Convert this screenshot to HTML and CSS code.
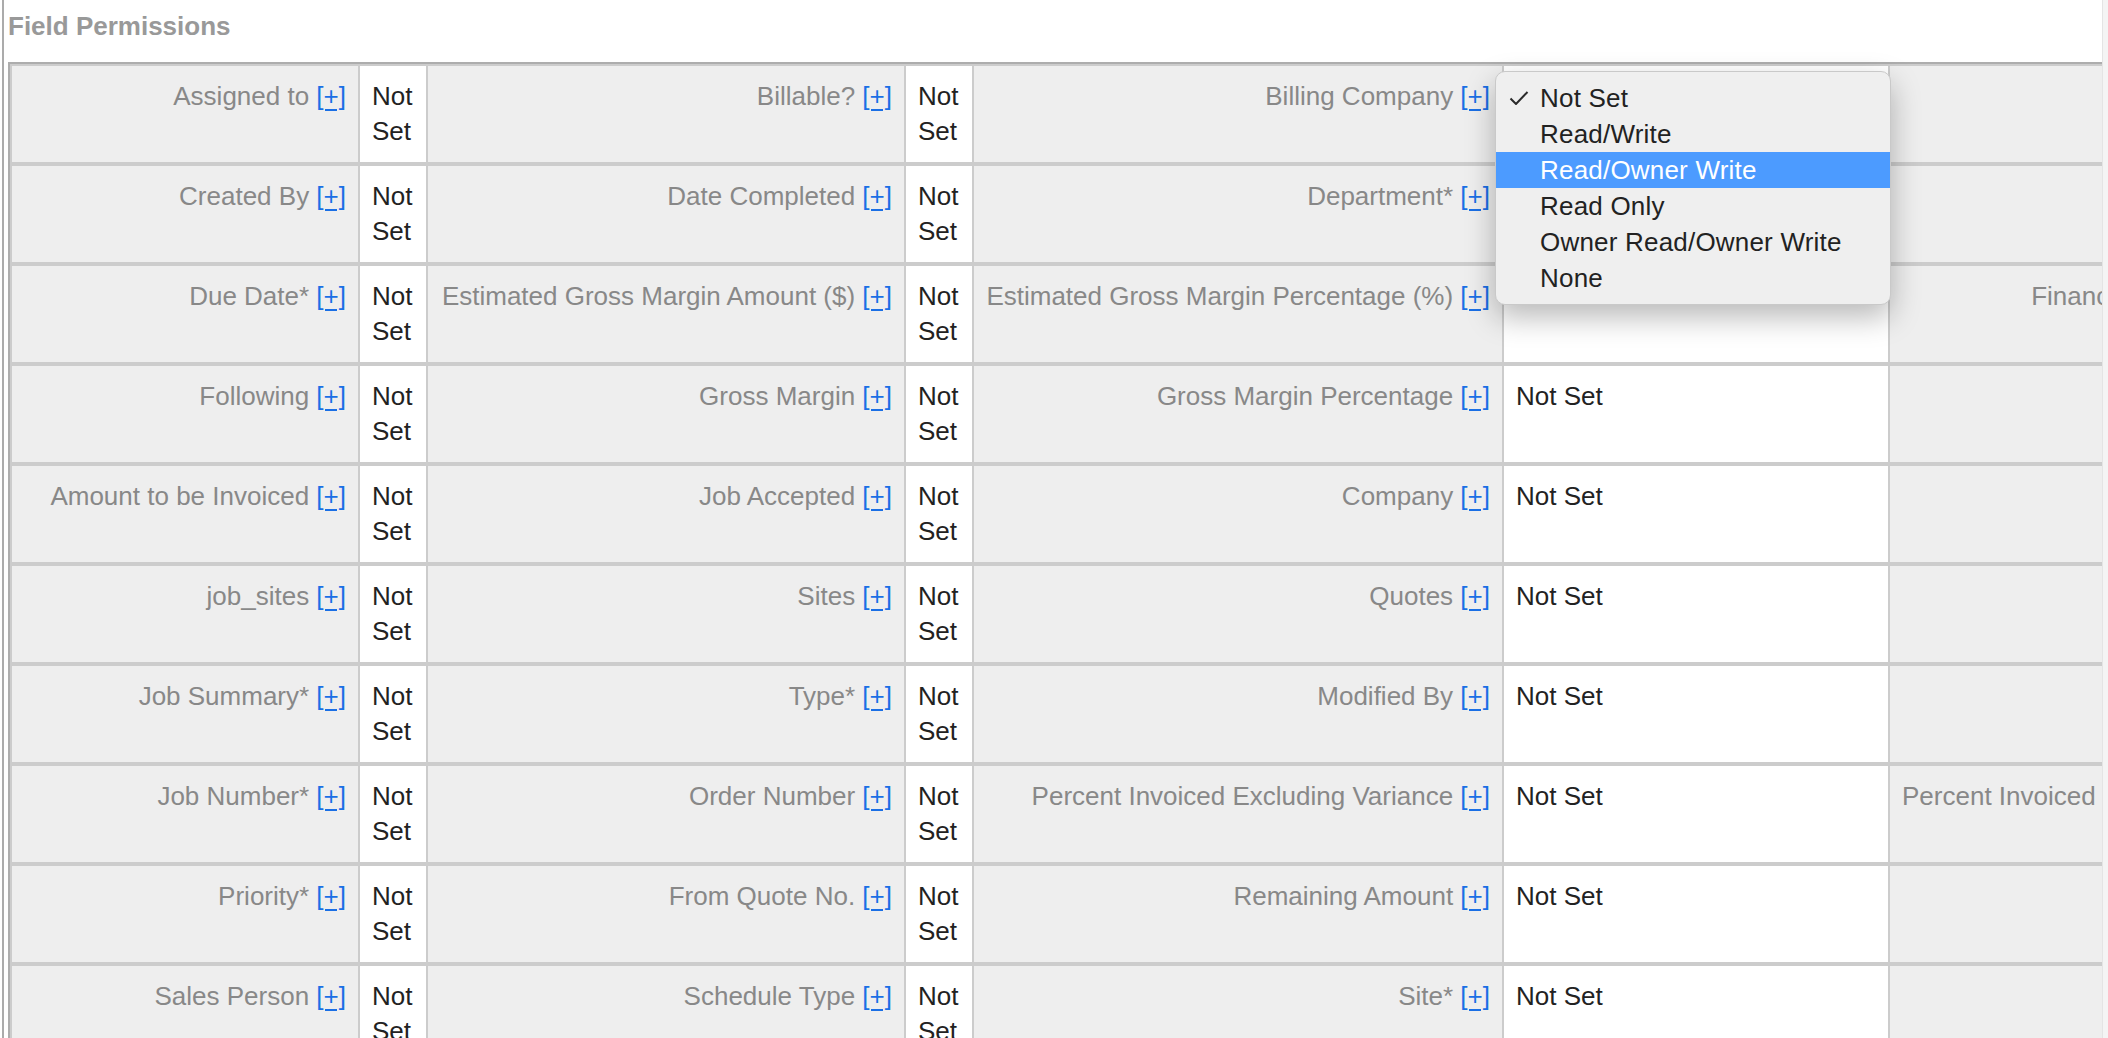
FILE: index.html
```html
<!DOCTYPE html>
<html lang="en">
<head>
<meta charset="utf-8">
<title>Field Permissions</title>
<link rel="stylesheet" href="styles.css">
</head>
<body>
<div class="page">
  <div class="panel">
    <h2 class="panel-title">Field Permissions</h2>
    <table class="perm-table">
      <colgroup>
        <col class="c-l1"><col class="c-v1"><col class="c-l2"><col class="c-v2"><col class="c-l3"><col class="c-v3"><col class="c-l4">
      </colgroup>
      <tbody>
        <tr>
          <td class="lbl first">Assigned to <a class="add" href="#">[+]</a></td><td class="val">Not Set</td>
          <td class="lbl">Billable? <a class="add" href="#">[+]</a></td><td class="val">Not Set</td>
          <td class="lbl">Billing Company <a class="add" href="#">[+]</a></td>
          <td class="val val-select">Not Set
            <ul class="menu">
              <li class="menu-item"><svg class="check" viewBox="0 0 20 14" width="20" height="14"><path d="M1.5 7.5 L7 13 L18.5 1" fill="none" stroke="#2a2a2a" stroke-width="2"/></svg>Not Set</li>
              <li class="menu-item">Read/Write</li>
              <li class="menu-item active">Read/Owner Write</li>
              <li class="menu-item">Read Only</li>
              <li class="menu-item">Owner Read/Owner Write</li>
              <li class="menu-item">None</li>
            </ul>
          </td>
          <td class="lbl"></td>
        </tr>
        <tr>
          <td class="lbl first">Created By <a class="add" href="#">[+]</a></td><td class="val">Not Set</td>
          <td class="lbl">Date Completed <a class="add" href="#">[+]</a></td><td class="val">Not Set</td>
          <td class="lbl">Department* <a class="add" href="#">[+]</a></td><td class="val">Not Set</td>
          <td class="lbl"></td>
        </tr>
        <tr>
          <td class="lbl first">Due Date* <a class="add" href="#">[+]</a></td><td class="val">Not Set</td>
          <td class="lbl">Estimated Gross Margin Amount ($) <a class="add" href="#">[+]</a></td><td class="val">Not Set</td>
          <td class="lbl">Estimated Gross Margin Percentage (%) <a class="add" href="#">[+]</a></td><td class="val">Not Set</td>
          <td class="lbl">Financial Status <a class="add" href="#">[+]</a></td>
        </tr>
        <tr>
          <td class="lbl first">Following <a class="add" href="#">[+]</a></td><td class="val">Not Set</td>
          <td class="lbl">Gross Margin <a class="add" href="#">[+]</a></td><td class="val">Not Set</td>
          <td class="lbl">Gross Margin Percentage <a class="add" href="#">[+]</a></td><td class="val">Not Set</td>
          <td class="lbl"></td>
        </tr>
        <tr>
          <td class="lbl first">Amount to be Invoiced <a class="add" href="#">[+]</a></td><td class="val">Not Set</td>
          <td class="lbl">Job Accepted <a class="add" href="#">[+]</a></td><td class="val">Not Set</td>
          <td class="lbl">Company <a class="add" href="#">[+]</a></td><td class="val">Not Set</td>
          <td class="lbl"></td>
        </tr>
        <tr>
          <td class="lbl first">job_sites <a class="add" href="#">[+]</a></td><td class="val">Not Set</td>
          <td class="lbl">Sites <a class="add" href="#">[+]</a></td><td class="val">Not Set</td>
          <td class="lbl">Quotes <a class="add" href="#">[+]</a></td><td class="val">Not Set</td>
          <td class="lbl"></td>
        </tr>
        <tr>
          <td class="lbl first">Job Summary* <a class="add" href="#">[+]</a></td><td class="val">Not Set</td>
          <td class="lbl">Type* <a class="add" href="#">[+]</a></td><td class="val">Not Set</td>
          <td class="lbl">Modified By <a class="add" href="#">[+]</a></td><td class="val">Not Set</td>
          <td class="lbl"></td>
        </tr>
        <tr>
          <td class="lbl first">Job Number* <a class="add" href="#">[+]</a></td><td class="val">Not Set</td>
          <td class="lbl">Order Number <a class="add" href="#">[+]</a></td><td class="val">Not Set</td>
          <td class="lbl">Percent Invoiced Excluding Variance <a class="add" href="#">[+]</a></td><td class="val">Not Set</td>
          <td class="lbl">Percent Invoiced Including Variance <a class="add" href="#">[+]</a></td>
        </tr>
        <tr>
          <td class="lbl first">Priority* <a class="add" href="#">[+]</a></td><td class="val">Not Set</td>
          <td class="lbl">From Quote No. <a class="add" href="#">[+]</a></td><td class="val">Not Set</td>
          <td class="lbl">Remaining Amount <a class="add" href="#">[+]</a></td><td class="val">Not Set</td>
          <td class="lbl"></td>
        </tr>
        <tr>
          <td class="lbl first">Sales Person <a class="add" href="#">[+]</a></td><td class="val">Not Set</td>
          <td class="lbl">Schedule Type <a class="add" href="#">[+]</a></td><td class="val">Not Set</td>
          <td class="lbl">Site* <a class="add" href="#">[+]</a></td><td class="val">Not Set</td>
          <td class="lbl"></td>
        </tr>
      </tbody>
    </table>
  </div>
  <div class="scroll-edge"></div>
</div>
</body>
</html>
```
FILE: styles.css
```css
html, body {
  margin: 0;
  padding: 0;
  background: #fff;
}
body {
  font-family: "Liberation Sans", Arial, Helvetica, sans-serif;
  height: 1038px;
  overflow: hidden;
}
.page {
  display: flex;
  height: 1038px;
}
.panel {
  flex: 1;
  min-width: 0;
  margin-left: 2px;
  border-left: 2px solid #ababab;
  padding-left: 4px;
  overflow: hidden;
}
.scroll-edge {
  width: 5px;
  background: #f4f4f4;
  border-left: 1px solid #e4e4e4;
}
.panel-title {
  margin: 0 0 21px 0;
  padding-top: 11px;
  font-size: 26px;
  line-height: 30px;
  font-weight: bold;
  color: #999;
}
.perm-table {
  border-collapse: separate;
  border-spacing: 0;
  table-layout: fixed;
  width: 2260px;
  border: 2px solid #adadad;
}
.c-l1 { width: 349px; }
.c-v1 { width: 68px; }
.c-l2 { width: 478px; }
.c-v2 { width: 68px; }
.c-l3 { width: 530px; }
.c-v3 { width: 386px; }
.c-l4 { width: 377px; }
.perm-table td {
  border-top: 2px solid #ccc;
  border-bottom: 2px solid #ccc;
  border-left: 1px solid #ccc;
  border-right: 1px solid #ccc;
  padding: 13px 12px;
  vertical-align: top;
  font-size: 26px;
  line-height: 35px;
}
.perm-table td.first {
  border-left-width: 2px;
}
.lbl {
  background: #eee;
  color: #888;
  text-align: right;
  white-space: nowrap;
}
.val {
  background: #fff;
  color: #222;
}
.add {
  color: #1a6fe5;
  text-decoration: underline;
  text-decoration-thickness: 2px;
  text-underline-offset: 4px;
}
.val-select {
  position: relative;
}
.menu {
  position: absolute;
  left: -9px;
  top: 5px;
  width: 394px;
  margin: 0;
  padding: 8px 0;
  list-style: none;
  background: #efefef;
  border: 1px solid #c9c9c9;
  border-radius: 10px;
  box-shadow: 0 12px 30px rgba(0, 0, 0, 0.28);
  z-index: 5;
}
.menu-item {
  position: relative;
  height: 36px;
  line-height: 36px;
  padding-left: 44px;
  color: #222;
  font-size: 26px;
  letter-spacing: 0.2px;
  white-space: nowrap;
}
.menu-item.active {
  background: #4c9bff;
  color: #fff;
}
.check {
  position: absolute;
  left: 13px;
  top: 11px;
}
```
